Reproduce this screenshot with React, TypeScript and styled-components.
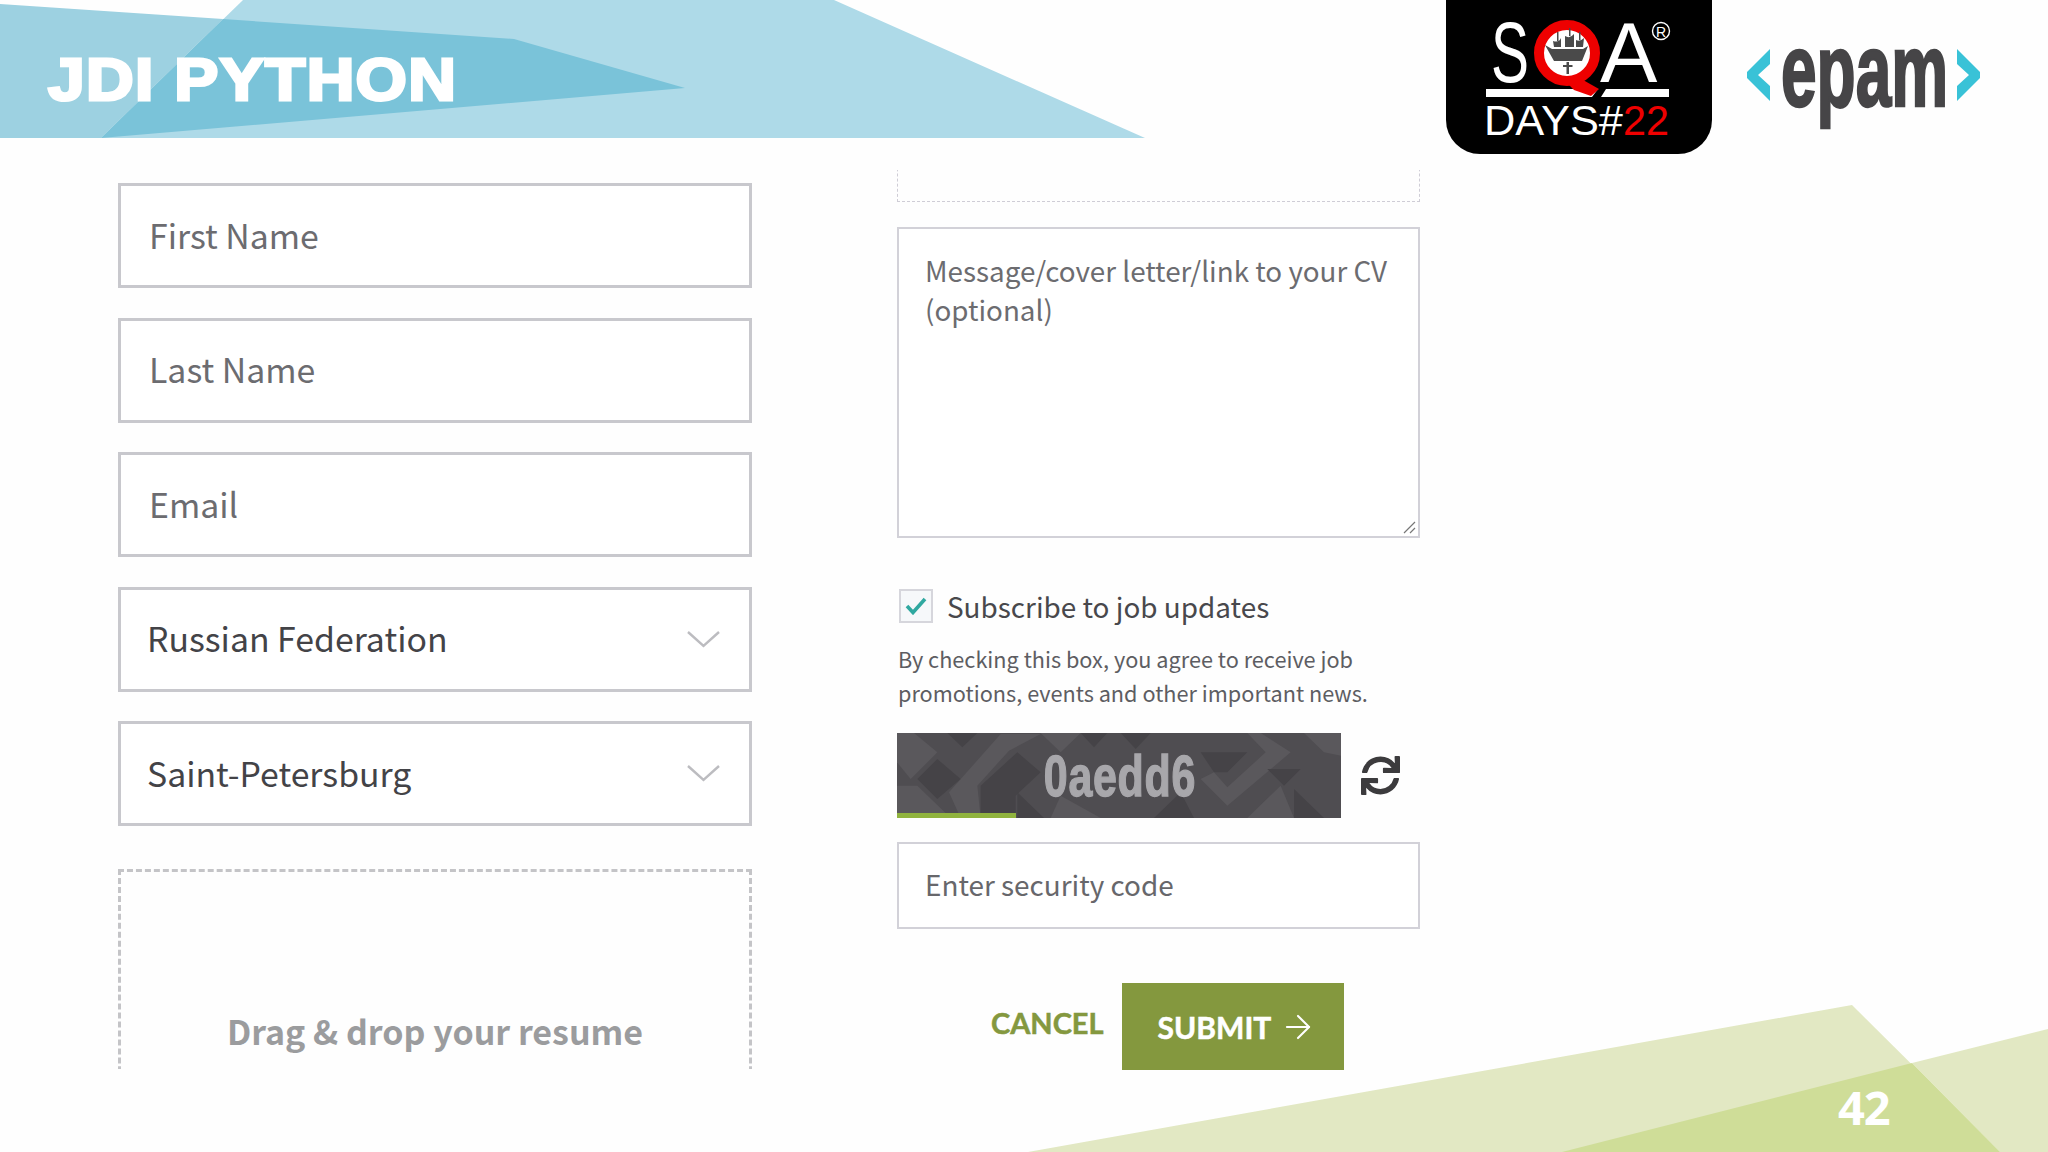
import React from 'react';
import styled, { createGlobalStyle } from 'styled-components';
import { ArrowRight } from 'lucide-react';
import { FaSync } from 'react-icons/fa';

const Global = createGlobalStyle`
  html, body { margin: 0; padding: 0; background: #fff; }
  * { box-sizing: border-box; }
`;

const SOURCE = `"Noto Sans CJK SC", "Noto Sans", sans-serif`;

const Slide = styled.div`
  position: relative;
  width: 2048px;
  height: 1152px;
  overflow: hidden;
  background: #fefefe;
  font-family: ${SOURCE};
`;

const BackdropTop = styled.svg`
  position: absolute;
  left: 0;
  top: 0;
`;

const BackdropBottom = styled.svg`
  position: absolute;
  left: 0;
  bottom: 0;
`;

const PageNumber = styled.div`
  position: absolute;
  left: 1838px;
  top: 1080px;
  font: bold 47px/54px "Open Sans", sans-serif;
  letter-spacing: -1px;
  color: #fff;
`;

const Header = styled.header`
  position: relative;
  display: flex;
  align-items: flex-start;
  height: 154px;
`;

const Title = styled.h1`
  margin: 47px 0 0 48px;
  font: bold 60px/66px "Liberation Sans", sans-serif;
  letter-spacing: 1.2px;
  color: #fff;
  -webkit-text-stroke: 3px #fff;
  transform: scaleX(1.1);
  transform-origin: left center;
`;

const Logos = styled.div`
  margin-left: auto;
  margin-right: 68px;
  display: flex;
  align-items: flex-start;
  gap: 34px;
`;

const LogoSvg = styled.svg`
  display: block;
  overflow: visible;
`;

const Main = styled.main`
  position: relative;
  display: flex;
  align-items: flex-start;
  padding-left: 118px;
  gap: 145px;
`;

const LeftColumn = styled.div`
  width: 634px;
  padding-top: 29px;
  display: flex;
  flex-direction: column;
  gap: 29.5px;
`;

const RightColumn = styled.div`
  width: 523px;
  padding-top: 16px;
  display: flex;
  flex-direction: column;
`;

const Field = styled.div<{ $selected?: boolean }>`
  height: 105px;
  display: flex;
  align-items: center;
  justify-content: space-between;
  padding: 0 ${p => (p.$selected ? '29px 3px 26px' : '0 3px 28px')};
  border: 3px solid #c8c8cd;
  background: #fff;
  font-size: 33.8px;
  color: ${p => (p.$selected ? '#434347' : '#6c6c70')};
`;

const FieldChevron = styled.svg`
  flex-shrink: 0;
  margin-top: 3px;
`;

const DropClip = styled.div`
  height: 200px;
  margin-top: 13px;
  overflow: hidden;
`;

const DropZone = styled.div`
  height: 320px;
  border: 3px dashed #c4c4c7;
  padding-top: 129px;
  text-align: center;
  font-size: 34px;
  line-height: 60px;
  font-weight: 700;
  color: #9b9c9e;
`;

const ThinClip = styled.div`
  height: 32px;
  display: flex;
  align-items: flex-end;
  overflow: hidden;
`;

const ThinDashed = styled.div`
  width: 100%;
  height: 100px;
  flex-shrink: 0;
  border: 1.5px dashed #cfcdd6;
`;

const MessageBox = styled.div`
  position: relative;
  height: 311px;
  margin-top: 25px;
  padding: 22px 26px;
  border: 2px solid #d2d1d8;
  background: #fff;
  font-size: 27.8px;
  line-height: 39px;
  color: #6c6c70;
  white-space: nowrap;
`;

const Grip = styled.svg`
  position: absolute;
  right: 2px;
  bottom: 2px;
`;

const CheckRow = styled.label`
  display: flex;
  align-items: center;
  gap: 14px;
  margin-top: 51px;
  margin-left: 2px;
  height: 35px;
  padding-bottom: 1px;
  font-size: 27.9px;
  color: #48484c;
`;

const CheckBox = styled.span`
  width: 34px;
  height: 34px;
  display: flex;
  align-items: center;
  justify-content: center;
  border: 2px solid #d6d6dc;
  background: #f6f8fa;
`;

const Hint = styled.p`
  margin: 18px 0 0 1px;
  font-size: 21.7px;
  line-height: 34px;
  color: #5d5d62;
  white-space: nowrap;
`;

const CaptchaRow = styled.div`
  display: flex;
  align-items: center;
  gap: 20px;
  margin-top: 23px;
  color: #3c3b3d;
`;

const Captcha = styled.div`
  position: relative;
  width: 444px;
  height: 85px;
  display: flex;
  align-items: center;
  justify-content: center;
  overflow: hidden;
  background: #4f4d51;
`;

const CaptchaArt = styled.svg`
  position: absolute;
  inset: 0;
`;

const CaptchaCode = styled.span`
  position: relative;
  margin-left: 2px;
  font: bold 58px/85px "Liberation Sans", sans-serif;
  letter-spacing: 1px;
  color: #a8a7ab;
  -webkit-text-stroke: 1.4px #a8a7ab;
  transform: scaleX(0.74);
`;

const Progress = styled.div`
  position: absolute;
  left: 0;
  bottom: 0;
  width: 119px;
  height: 5px;
  background: #90b33e;
`;

const CodeInput = styled.div`
  height: 87px;
  margin-top: 24px;
  padding: 0 0 4px 26px;
  display: flex;
  align-items: center;
  border: 2px solid #d2d1d8;
  background: #fff;
  font-size: 27.9px;
  color: #67676b;
`;

const Actions = styled.div`
  display: flex;
  align-items: center;
  margin-top: 54px;
  padding-left: 94px;
  gap: 18px;
`;

const Cancel = styled.span`
  font: bold 29px/40px Lato, sans-serif;
  -webkit-text-stroke: 0.5px #84983f;
  color: #84983f;
  margin-top: -8px;
`;

const Submit = styled.div`
  width: 222px;
  height: 87px;
  display: flex;
  align-items: center;
  padding-left: 36px;
  gap: 8px;
  background: #84983e;
  font: bold 30px/40px Lato, sans-serif;
  -webkit-text-stroke: 0.5px #fff;
  color: #fff;
`;

const SubmitArrow = styled(ArrowRight)`
  -webkit-text-stroke: 0;
  flex-shrink: 0;
`;

const Chevron = () => (
  <FieldChevron width="33" height="17" viewBox="0 0 33 17">
    <polyline points="1,1 16.5,15 32,1" fill="none" stroke="#bcbcc0" strokeWidth="2.4" />
  </FieldChevron>
);

const LOGO_FONT = '"Liberation Sans", sans-serif';

const SqaLogo = () => (
  <LogoSvg width="266" height="154" viewBox="0 0 266 154">
    <path d="M0 0H266V120A34 34 0 0 1 232 154H34A34 34 0 0 1 0 120Z" fill="#000" />
    <g fill="#fff" fontFamily={LOGO_FONT}>
      <text x="45" y="82" fontSize="86" textLength="38" lengthAdjust="spacingAndGlyphs">S</text>
      <text x="154" y="82" fontSize="86">A</text>
      <text x="38" y="135" fontSize="42" textLength="139" lengthAdjust="spacingAndGlyphs">DAYS#</text>
      <text x="215" y="36.5" fontSize="14" textAnchor="middle">R</text>
    </g>
    <circle cx="215" cy="31" r="8.5" fill="none" stroke="#fff" strokeWidth="1.4" />
    <rect x="40" y="89" width="183" height="8" fill="#fff" />
    <polygon points="152,89 160,89 155,97 146,97" fill="#000" />
    <circle cx="121" cy="53" r="28" fill="#fff" stroke="#ee0000" strokeWidth="10" />
    <polygon points="116,78 130,76 153,89 145,96 128,90" fill="#ee0000" />
    <path
      d="M99 45 L106 49 L137 49 L142 46 L136 61 L108 61 Z
         M107 41 Q113 43 115 38 L115 47 L108 47 Z
         M119 36 Q124 39 128 34 L128 47 L119 47 Z
         M130 40 Q134 42 138 38 L137 47 L130 47 Z
         M111 32 H112.5 V41 H111 Z M123 28 H124.5 V36 H123 Z M133 32 H134.5 V40 H133 Z
         M120.5 62 H123 V74 H120.5 Z M117 65 H126.5 V67 H117 Z"
      fill="#4a4a4a"
    />
    <text x="177" y="135" fontSize="42" fill="#ee0000" fontFamily={LOGO_FONT} textLength="46" lengthAdjust="spacingAndGlyphs">22</text>
  </LogoSvg>
);

const EpamLogo = () => (
  <LogoSvg width="234" height="130" viewBox="0 0 234 130">
    <polygon points="24,49 24,64 12,75 24,86 24,101 1,78 1,72" fill="#39c2d7" />
    <polygon points="211,49 211,64 223,75 211,86 211,101 234,78 234,72" fill="#39c2d7" />
    <g transform="translate(35 106) scale(0.615 1)">
      <text
        x="0"
        y="0"
        fontFamily={LOGO_FONT}
        fontWeight="700"
        fontSize="104"
        fill="#464547"
        stroke="#464547"
        strokeWidth="2.5"
      >
        epam
      </text>
    </g>
  </LogoSvg>
);

const App = () => (
  <Slide>
    <Global />
    <BackdropTop width="1146" height="138" viewBox="0 0 1146 138">
      <polygon points="243,0 834,0 1145,138 101,138" fill="#aedae8" />
      <polygon points="0,4 223,19 101,138 0,138" fill="#9dd1e1" />
      <polygon points="223,19 514,39 685,88 101,138" fill="#7ac3d9" />
    </BackdropTop>
    <BackdropBottom width="2048" height="160" viewBox="0 992 2048 160">
      <polygon points="1852,1005 2000,1152 1028,1152" fill="#e2e8c3" />
      <polygon points="1912,1063 2048,1029 2048,1152 2000,1152" fill="#e2e8c3" />
      <polygon points="1912,1063 2000,1152 1562,1152" fill="#cfdd98" />
    </BackdropBottom>
    <PageNumber>42</PageNumber>

    <Header>
      <Title>JDI PYTHON</Title>
      <Logos>
        <SqaLogo />
        <EpamLogo />
      </Logos>
    </Header>

    <Main>
      <LeftColumn>
        <Field>First Name</Field>
        <Field>Last Name</Field>
        <Field>Email</Field>
        <Field $selected>
          Russian Federation
          <Chevron />
        </Field>
        <Field $selected>
          Saint-Petersburg
          <Chevron />
        </Field>
        <DropClip>
          <DropZone>Drag &amp; drop your resume</DropZone>
        </DropClip>
      </LeftColumn>

      <RightColumn>
        <ThinClip>
          <ThinDashed />
        </ThinClip>
        <MessageBox>
          Message/cover letter/link to your CV
          <br />
          (optional)
          <Grip width="14" height="14" viewBox="0 0 14 14">
            <path d="M2 13 L13 2 M8 13 L13 8" stroke="#777" strokeWidth="1.2" />
          </Grip>
        </MessageBox>
        <CheckRow>
          <CheckBox>
            <svg width="22" height="18" viewBox="0 0 22 18">
              <polyline points="2,9 8,15.5 20,2" fill="none" stroke="#2fa8a0" strokeWidth="3.6" />
            </svg>
          </CheckBox>
          Subscribe to job updates
        </CheckRow>
        <Hint>
          By checking this box, you agree to receive job
          <br />
          promotions, events and other important news.
        </Hint>
        <CaptchaRow>
          <Captcha>
            <CaptchaArt width="444" height="85" viewBox="9 12 1332 255" preserveAspectRatio="none">
              <g fill="#5a585c">
                <polygon points="165,190 320,15 440,15 345,65 250,170 260,267 200,267" />
                <polygon points="920,150 1000,230 1190,70 1100,12 1060,12 1115,70 1000,175 960,130" />
                <polygon points="9,12 60,12 130,70 50,150 9,100" />
                <polygon points="440,12 560,12 500,70" />
                <polygon points="1230,12 1341,12 1341,80 1290,70" />
                <polygon points="9,170 70,170 170,267 9,267" />
                <polygon points="500,200 620,267 470,267" />
                <polygon points="1060,267 1160,170 1200,267" />
              </g>
              <g fill="#454347">
                <polygon points="70,150 130,90 200,150 130,210" />
                <polygon points="260,170 370,70 440,130 365,200 365,267 260,267" />
                <polygon points="920,70 1060,70 1000,130 960,130" />
                <polygon points="370,190 450,267 370,267" />
                <polygon points="1200,180 1290,267 1200,267" />
                <polygon points="680,12 770,12 725,60" />
                <polygon points="560,12 640,12 600,55" />
                <polygon points="160,12 250,12 205,55" />
                <polygon points="1120,120 1220,120 1170,170" />
                <polygon points="780,267 860,190 900,267" />
              </g>
            </CaptchaArt>
            <CaptchaCode>0aedd6</CaptchaCode>
            <Progress />
          </Captcha>
          <FaSync size={39} />
        </CaptchaRow>
        <CodeInput>Enter security code</CodeInput>
        <Actions>
          <Cancel>CANCEL</Cancel>
          <Submit>
            SUBMIT
            <SubmitArrow size={38} strokeWidth={1.3} />
          </Submit>
        </Actions>
      </RightColumn>
    </Main>
  </Slide>
);

export default App;
